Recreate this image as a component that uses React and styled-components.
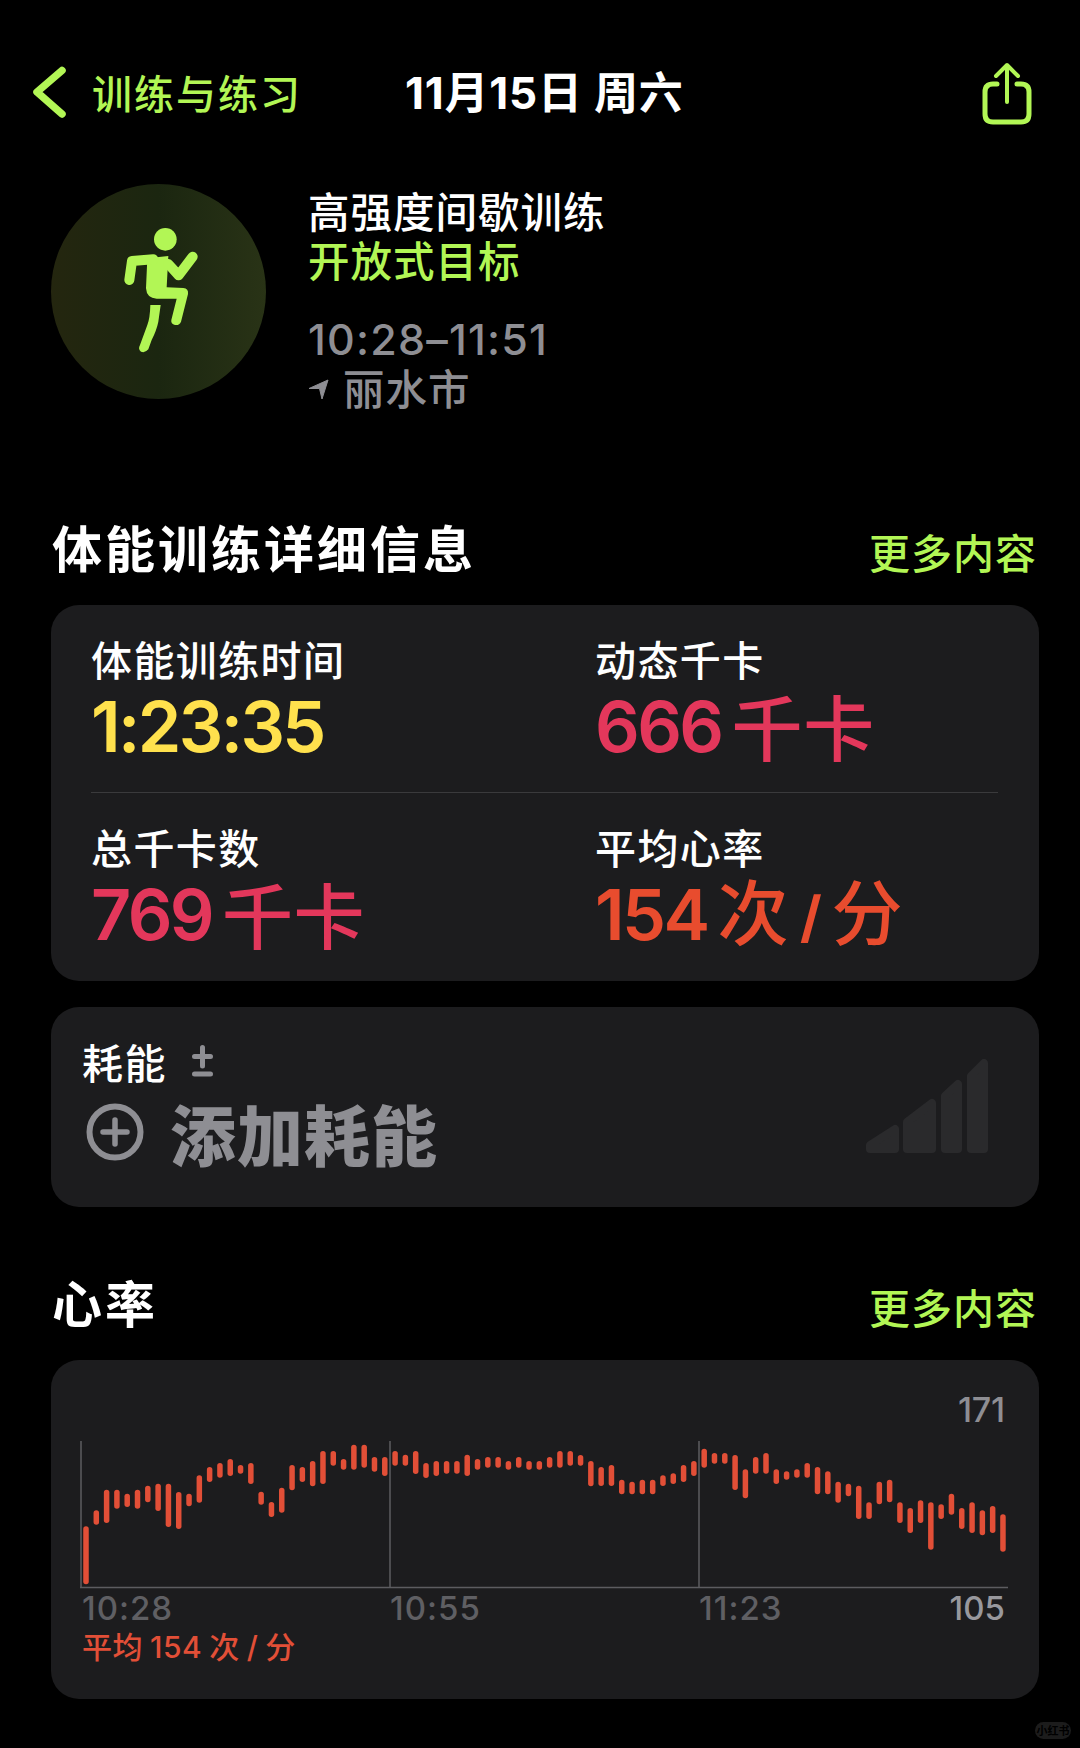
import React from 'react'
import styled, { createGlobalStyle } from 'styled-components'

const green = '#b2f655'
const cjk = '"Noto Sans CJK SC", sans-serif'
const latin = 'Inter, "Noto Sans CJK SC", sans-serif'

const GlobalStyle = createGlobalStyle`
  html, body {
    margin: 0;
    padding: 0;
    background: #000;
  }
  * {
    box-sizing: border-box;
  }
`

const Page = styled.div`
  position: relative;
  width: 1080px;
  height: 1748px;
  overflow: hidden;
  background: #000;
  color: #fff;
  font-family: ${cjk};
`

const Nav = styled.div`
  display: grid;
  grid-template-columns: 372px auto 1fr;
  align-items: center;
  height: 64px;
  margin-top: 60px;
  padding: 0 48px 0 33px;
`

const Back = styled.div`
  display: flex;
  align-items: center;
  gap: 26px;
  padding-bottom: 3px;
  color: ${green};
  font-size: 40px;
  font-weight: 500;
  letter-spacing: 2px;
  line-height: 64px;
`

const NavTitle = styled.div`
  padding-bottom: 2px;
  font-family: ${latin};
  font-size: 44px;
  font-weight: 700;
  line-height: 64px;
  letter-spacing: 0.8px;
  white-space: pre;
`

const ShareWrap = styled.div`
  justify-self: end;
  height: 64px;
`

const Hero = styled.div`
  display: flex;
  gap: 42px;
  margin-top: 60px;
  padding-left: 51px;
`

const Badge = styled.div`
  width: 215px;
  height: 215px;
  flex: none;
  border-radius: 50%;
  background: linear-gradient(90deg, #24260f 0%, #1b2610 50%, #293316 100%);
`

const HeroText = styled.div`
  display: flex;
  flex-direction: column;
`

const HeroLine = styled.div`
  height: 52px;
  padding-top: ${p => p.$nudge || '0'};
  margin-top: ${p => p.$top || '0'};
  font-family: ${latin};
  font-size: ${p => p.$size || '41.5px'};
  font-weight: 500;
  line-height: 52px;
  letter-spacing: ${p => p.$spacing || '1px'};
  color: ${p => p.$color || '#fff'};
`

const Location = styled(HeroLine)`
  display: flex;
  align-items: center;
  gap: 14px;
`

const SectionHead = styled.div`
  display: flex;
  justify-content: space-between;
  align-items: center;
  height: 60px;
  margin-top: ${p => p.$top};
  margin-bottom: 26px;
  padding: 0 43px 0 52px;
`

const SectionTitle = styled.div`
  padding-bottom: 6px;
  font-size: 50px;
  font-weight: 700;
  line-height: 60px;
  letter-spacing: 3px;
`

const More = styled.div`
  padding-top: 4px;
  color: ${green};
  font-size: 41px;
  font-weight: 500;
  line-height: 60px;
  letter-spacing: 1px;
`

const Card = styled.div`
  width: 988px;
  margin-left: 51px;
  background: #1c1c1e;
  border-radius: 28px;
`

const StatsCard = styled(Card)`
  height: 376px;
  padding: 0 41px 0 40px;
`

const StatsRow = styled.div`
  display: grid;
  grid-template-columns: 504px 1fr;
  height: 188px;
  padding-top: 30px;
  border-bottom: ${p => (p.$divider ? '1px solid #3a3a3c' : 'none')};
`

const StatLabel = styled.div`
  font-size: 41px;
  font-weight: 500;
  line-height: 46px;
  letter-spacing: 1.4px;
`

const StatValue = styled.div`
  display: flex;
  align-items: center;
  height: 86px;
  margin-top: 3px;
  color: ${p => p.$color};
`

const Num = styled.span`
  font-family: ${latin};
  font-size: 70px;
  font-weight: 600;
  line-height: 86px;
  letter-spacing: -2.6px;
`

const Unit = styled.span`
  margin-left: 10px;
  padding-bottom: 6px;
  font-size: 71px;
  font-weight: 500;
  line-height: 86px;
  letter-spacing: 0.6px;
  white-space: pre;
`

const Slash = styled.span`
  margin: 0 9px 0 11px;
  font-family: ${latin};
  font-size: 56px;
  font-weight: 700;
  vertical-align: 2px;
`

const DrainCard = styled(Card)`
  position: relative;
  height: 200px;
  margin-top: 26px;
  padding: 31px 0 0 31px;
`

const DrainHead = styled.div`
  display: flex;
  align-items: center;
  gap: 25px;
  height: 46px;
`

const DrainLabel = styled.div`
  font-size: 41px;
  font-weight: 500;
  line-height: 46px;
  letter-spacing: 1.4px;
`

const AddRow = styled.div`
  display: flex;
  align-items: center;
  gap: 26px;
  height: 70px;
  margin-top: 13px;
  padding-left: 4px;
  color: #8e8e93;
`

const AddText = styled.div`
  font-size: 66px;
  font-weight: 900;
  line-height: 70px;
  letter-spacing: 1px;
`

const EffortBars = styled.svg`
  position: absolute;
  right: 51px;
  top: 52px;
`

const ChartCard = styled(Card)`
  height: 339px;
  padding: 30px 34px 0 29px;
`

const MaxValue = styled.div`
  font-family: ${latin};
  font-size: 34px;
  font-weight: 500;
  line-height: 40px;
  text-align: right;
  color: #8e8e93;
  letter-spacing: -0.2px;
`

const ChartSvg = styled.svg`
  display: block;
  margin-top: 11px;
`

const AxisRow = styled.div`
  display: grid;
  grid-template-columns: 308px 309px 1fr auto;
  height: 39px;
  padding-left: 2px;
  font-family: ${latin};
  font-size: 33px;
  font-weight: 500;
  line-height: 39px;
  color: #5f5f63;
  letter-spacing: 1px;
`

const MinValue = styled.div`
  color: #98989d;
  letter-spacing: 0;
`

const Average = styled.div`
  height: 40px;
  padding-left: 2px;
  font-family: ${latin};
  font-size: 30px;
  font-weight: 500;
  line-height: 38px;
  color: #e24f37;
  letter-spacing: 0.5px;
  word-spacing: -1.5px;
  white-space: pre;
`

const Watermark = styled.div`
  position: absolute;
  left: 1035px;
  top: 1722px;
  width: 36px;
  height: 17px;
  border-radius: 9px;
  background: #1c1c1c;
  color: #000;
  font-size: 11px;
  font-weight: 700;
  line-height: 17px;
  text-align: center;
  white-space: nowrap;
`

// top and bottom of each bar, read off the reference at 3x from y = 302
const bars = [
  [558, 732], [510, 553], [448, 548], [448, 505], [460, 500], [448, 505], [436, 486], [430, 512],
  [430, 560], [455, 566], [460, 498], [405, 487], [380, 425], [368, 412], [356, 407], [374, 400],
  [368, 431], [454, 493], [485, 530], [442, 517], [374, 450], [380, 425], [362, 438], [332, 431],
  [332, 376], [356, 388], [313, 388], [313, 382], [350, 394], [350, 407], [332, 376], [343, 376],
  [332, 401], [368, 413], [362, 407], [362, 400], [362, 400], [343, 407], [356, 388], [350, 382],
  [350, 382], [362, 388], [350, 382], [362, 388], [362, 388], [350, 382], [332, 382], [332, 376],
  [344, 376], [362, 438], [380, 437], [374, 437], [418, 462], [424, 462], [418, 462], [418, 462],
  [405, 437], [399, 431], [374, 425], [362, 407], [325, 382], [338, 370], [338, 370], [344, 449],
  [387, 474], [350, 400], [338, 400], [387, 431], [393, 418], [387, 412], [368, 412], [380, 462],
  [393, 462], [424, 487], [430, 468], [436, 536], [486, 536], [424, 492], [418, 486], [486, 548],
  [503, 578], [480, 548], [486, 628], [492, 536], [460, 523], [503, 566], [486, 578], [510, 585],
  [497, 578], [522, 634],
]

const Chevron = () => (
  <svg width="33" height="52" viewBox="0 0 33 52" fill="none">
    <path d="M29 4.5 L4 26 L29 48" stroke={green} strokeWidth="7.5" strokeLinecap="round" strokeLinejoin="round" />
  </svg>
)

const ShareIcon = () => (
  <svg width="50" height="64" viewBox="0 0 50 64" fill="none" stroke={green} strokeWidth="5" strokeLinecap="round" strokeLinejoin="round">
    <path d="M15 22 H11 Q3 22 3 30 V52 Q3 60 11 60 H39 Q47 60 47 52 V30 Q47 22 39 22 H35" />
    <path d="M25 40 V4" strokeWidth="4" />
    <path d="M14 14 L25 3 L36 14" strokeWidth="4" />
  </svg>
)

const Runner = () => (
  <svg width="215" height="215" viewBox="33 -18 645 645" fill={green}>
    <circle cx="376" cy="148" r="34" />
    <path d="M322 205 L385 198 L380 292 L430 294 Q446 296 444 312 L423 395 Q418 407 405 405 Q392 402 394 390 L410 326 L350 326 Q320 325 318 295 Z" />
    <path d="M331 345 L362 345 L355 395 Q350 420 335 450 L325 478 Q315 490 303 485 Q293 478 300 465 L322 405 Q330 385 331 345 Z" />
    <path d="M268 270 L276 213 L340 208" fill="none" stroke={green} strokeWidth="30" strokeLinecap="round" strokeLinejoin="round" />
    <path d="M385 222 L416 256 L458 200" fill="none" stroke={green} strokeWidth="30" strokeLinecap="round" strokeLinejoin="round" />
  </svg>
)

const LocationArrow = () => (
  <svg width="21" height="21" viewBox="0 0 21 21" fill="#8e8e93" stroke="#8e8e93" strokeWidth="1" strokeLinejoin="round">
    <path d="M1 9.5 L20 1 L14 20 L11.5 9.5 Z" />
  </svg>
)

const PlusMinus = () => (
  <svg width="21" height="32" viewBox="0 0 21 32" fill="none" stroke="#8e8e93" strokeWidth="5" strokeLinecap="round">
    <path d="M10.5 2.5 V21 M2.5 11.5 H18.5 M2.5 29 H18.5" />
  </svg>
)

const PlusCircle = () => (
  <svg width="58" height="58" viewBox="0 0 58 58" fill="none" stroke="#8e8e93" strokeWidth="6" strokeLinecap="round">
    <circle cx="29" cy="29" r="25.5" />
    <path d="M29 17 V41 M17 29 H41" strokeWidth="5.5" />
  </svg>
)

const Effort = () => (
  <EffortBars width="124" height="96" viewBox="0 0 124 96" fill="#2a2a2c" stroke="#2a2a2c" strokeWidth="8" strokeLinejoin="round">
    <path d="M6 90 V86 L31 70 V90 Z" />
    <path d="M43 90 V63 L68 44 V90 Z" />
    <path d="M81 90 V37 L94 25 V90 Z" />
    <path d="M107 90 V17 L120 4 V90 Z" />
  </EffortBars>
)

const HeartChart = () => (
  <ChartSvg width="930" height="148" viewBox="0 0 930 148">
    <g stroke="#5c5c60" strokeWidth="1.5">
      <line x1="1" y1="0" x2="1" y2="147" />
      <line x1="310" y1="0" x2="310" y2="147" />
      <line x1="619" y1="0" x2="619" y2="147" />
      <line x1="0" y1="146.5" x2="928" y2="146.5" />
    </g>
    {bars.map(([top, bottom], i) => (
      <rect
        key={i}
        x={3.25 + i * 10.303}
        y={(top - 302) / 3}
        width="5.5"
        height={(bottom - top) / 3}
        rx="2.75"
        fill="#e24f37"
      />
    ))}
  </ChartSvg>
)

export default function App() {
  return (
    <Page>
      <GlobalStyle />
      <Nav>
        <Back>
          <Chevron />
          <span>训练与练习</span>
        </Back>
        <NavTitle>11月15日 周六</NavTitle>
        <ShareWrap>
          <ShareIcon />
        </ShareWrap>
      </Nav>

      <Hero>
        <Badge>
          <Runner />
        </Badge>
        <HeroText>
          <HeroLine $nudge="3px">高强度间歇训练</HeroLine>
          <HeroLine $color={green}>开放式目标</HeroLine>
          <HeroLine $color="#8e8e93" $top="23px" $nudge="2px" $size="43px" $spacing="1.2px">10:28–11:51</HeroLine>
          <Location $color="#8e8e93" $nudge="1px">
            <LocationArrow />
            <span>丽水市</span>
          </Location>
        </HeroText>
      </Hero>

      <SectionHead $top="104px">
        <SectionTitle>体能训练详细信息</SectionTitle>
        <More>更多内容</More>
      </SectionHead>

      <StatsCard>
        <StatsRow $divider>
          <div>
            <StatLabel>体能训练时间</StatLabel>
            <StatValue $color="#ffe14d">
              <Num>1:23:35</Num>
            </StatValue>
          </div>
          <div>
            <StatLabel>动态千卡</StatLabel>
            <StatValue $color="#e3375b">
              <Num>666</Num>
              <Unit>千卡</Unit>
            </StatValue>
          </div>
        </StatsRow>
        <StatsRow>
          <div>
            <StatLabel>总千卡数</StatLabel>
            <StatValue $color="#e3375b">
              <Num>769</Num>
              <Unit>千卡</Unit>
            </StatValue>
          </div>
          <div>
            <StatLabel>平均心率</StatLabel>
            <StatValue $color="#e84c2e">
              <Num>154</Num>
              <Unit>次<Slash>/</Slash>分</Unit>
            </StatValue>
          </div>
        </StatsRow>
      </StatsCard>

      <DrainCard>
        <DrainHead>
          <DrainLabel>耗能</DrainLabel>
          <PlusMinus />
        </DrainHead>
        <AddRow>
          <PlusCircle />
          <AddText>添加耗能</AddText>
        </AddRow>
        <Effort />
      </DrainCard>

      <SectionHead $top="67px">
        <SectionTitle>心率</SectionTitle>
        <More>更多内容</More>
      </SectionHead>

      <ChartCard>
        <MaxValue>171</MaxValue>
        <HeartChart />
        <AxisRow>
          <span>10:28</span>
          <span>10:55</span>
          <span>11:23</span>
          <MinValue>105</MinValue>
        </AxisRow>
        <Average>平均 154 次 / 分</Average>
      </ChartCard>

      <Watermark>小红书</Watermark>
    </Page>
  )
}
